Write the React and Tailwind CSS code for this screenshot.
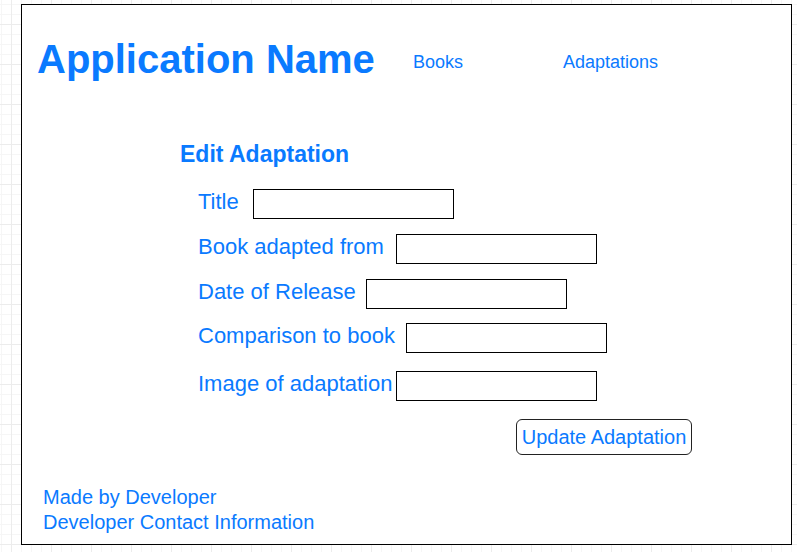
import React from 'react';

const fields = [
  { label: 'Title', width: 'w-[55px]', gap: 'mt-[23px]' },
  { label: 'Book adapted from', width: 'w-[198px]', gap: 'mt-[15px]' },
  { label: 'Date of Release', width: 'w-[168px]', gap: 'mt-[15px]' },
  { label: 'Comparison to book', width: 'w-[208px]', gap: 'mt-[14px]' },
  { label: 'Image of adaptation', width: 'w-[198px]', gap: 'mt-[18px]' },
];

export default function App() {
  return (
    <div className="w-[797px] h-[552px] overflow-hidden bg-white bg-[linear-gradient(to_right,#ececec_1px,transparent_1px),linear-gradient(to_bottom,#ececec_1px,transparent_1px),linear-gradient(to_right,#f6f6f6_1px,transparent_1px),linear-gradient(to_bottom,#f6f6f6_1px,transparent_1px)] bg-[size:40px_40px,40px_40px,10px_10px,10px_10px] bg-[position:11px_24px,11px_24px,1px_4px,1px_4px] pt-[4px] pl-[21px] font-['Liberation_Sans',Arial,Helvetica,sans-serif] text-[#0a7aff]">
      <div className="w-[771px] h-[541px] bg-white border border-black">
        {/* header */}
        <div className="flex items-start pt-[34px] pl-[15px]">
          <h1 className="w-[376px] text-[40px] leading-[40px] font-bold">Application Name</h1>
          <a className="w-[150px] mt-[14px] text-[18px] leading-[18px]">Books</a>
          <a className="mt-[14px] text-[18px] leading-[18px]">Adaptations</a>
        </div>

        <h2 className="mt-[64px] pl-[158px] text-[23px] leading-[23px] font-bold">Edit Adaptation</h2>

        <div className="pl-[176px]">
          {fields.map((f) => (
            <div key={f.label} className={`flex items-center h-[30px] ${f.gap}`}>
              <span className={`${f.width} mb-[6px] text-[22px] leading-[25px] whitespace-nowrap`}>{f.label}</span>
              <div className="w-[201px] h-[30px] border border-black bg-white" />
            </div>
          ))}
        </div>

        <button className="mt-[18px] ml-[494px] w-[176px] h-[36px] rounded-[6px] border border-[#222] bg-white text-[20px] leading-[24px] text-center">
          Update Adaptation
        </button>

        <div className="mt-[30px] pl-[21px] text-[20px] leading-[25px]">
          <p>Made by Developer</p>
          <p>Developer Contact Information</p>
        </div>
      </div>
    </div>
  );
}
